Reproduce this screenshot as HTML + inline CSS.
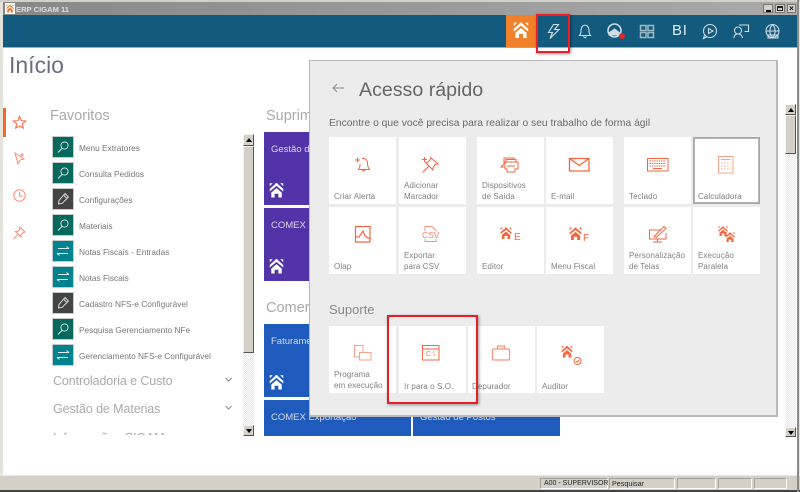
<!DOCTYPE html>
<html><head><meta charset="utf-8"><style>
html,body{margin:0;padding:0}
body{width:800px;height:492px;overflow:hidden;position:relative;background:#e4e3dc;font-family:"Liberation Sans",sans-serif}
div,span,svg{position:absolute;box-sizing:border-box}
.t{white-space:nowrap}
.tile{background:#fff;width:67px;height:67px}
.tile .l{position:absolute;left:5px;bottom:2px;font-size:8px;line-height:10.5px;color:#808080;letter-spacing:.1px;white-space:nowrap}
.tile svg{left:0;top:0;width:67px;height:67px;fill:none;stroke:#f4663f;stroke-width:1}
.fi{left:52px;width:22px;height:22px;border:1px solid #c5ccc9}
.fl{left:79px;font-size:8.3px;color:#777;white-space:nowrap;line-height:12px}
.g{background:#03695c}.k{background:#444}.c{background:#00838f}
.fi svg{left:0;top:0;width:20px;height:20px;fill:none;stroke:#dfecea;stroke-width:.9}
.sb{background:#d4d0c8;border:1px solid;border-color:#f5f4f0 #555 #555 #f5f4f0}
.h{font-size:12.5px;color:#aaa;left:53px;white-space:nowrap;letter-spacing:-.1px}
.sec{font-size:14.5px;color:#aaa;white-space:nowrap;font-weight:normal}
.hi{top:15px;height:32px;fill:none;stroke:#cfdde5;stroke-width:1.1}
.st{top:478px;height:11px;border:1px solid;border-color:#a5a29b #fff #fff #a5a29b}
.tl{color:#dcd8ee;font-size:9.5px;white-space:nowrap;line-height:12px}
.red{border:2px solid #ee1c25;box-shadow:1px 1px 3px rgba(0,0,0,.4)}
.tr{background:repeating-conic-gradient(#fff 0 25%,#e8e6e0 0 50%) 0 0/2px 2px}
</style></head><body>
<svg width="0" height="0" style="left:0;top:0"><defs>
<symbol id="logo" viewBox="0 0 20 20"><path fill="currentColor" d="M1 1H5L1 5ZM19 1H15L19 5ZM8 1H12L10 3ZM1 8.500 10 0.500 19 8.500 19 12 10 4.500 1 12ZM10 7.500 17 13.500V20H12.500V15H7.500V20H3V13.500Z"/></symbol>
<symbol id="mag" viewBox="0 0 20 20"><circle cx="11.500" cy="8.500" r="3.600"/><path d="M9 11.500 5 15.500"/></symbol>
<symbol id="wr" viewBox="0 0 20 20"><path d="M12 4.500 15.500 8 9 14.500 5.500 15 6 11.500ZM11 6.500 13.500 9"/></symbol>
<symbol id="ar" viewBox="0 0 20 20"><path d="M5 7.500H16M13.500 5.500 16 7.500M4 12.500H15M6.500 14.500 4 12.500"/></symbol>
</defs></svg>

<!-- title bar -->
<div style="left:3px;top:2px;width:794px;height:13px;background:linear-gradient(90deg,#888,#999 50%,#aaa)"></div>
<div style="left:5px;top:3px;width:10px;height:11px;background:#fff"></div>
<svg style="left:6px;top:4px;width:8px;height:9px;color:#e9702a" viewBox="0 0 20 20"><use href="#logo"/></svg>
<div class="t" style="left:16px;top:4px;font-size:7.600px;font-weight:bold;color:#ddd;line-height:11px">ERP CIGAM 11</div>
<div style="left:763px;top:4px;width:10px;height:9px;background:#d4d0c8;border:1px solid #777"><div style="left:2px;top:5px;width:5px;height:2px;background:#000"></div></div>
<div style="left:775px;top:4px;width:10px;height:9px;background:#d4d0c8;border:1px solid #777"><div style="left:1px;top:1px;width:6px;height:5px;border:1px solid #222;border-top-width:2px"></div></div>
<div style="left:787px;top:4px;width:9px;height:9px;background:#d4d0c8;border:1px solid #777;color:#000;font-size:8px;line-height:7px;text-align:center;font-weight:bold">×</div>

<!-- header -->
<div style="left:3px;top:15px;width:794px;height:33px;background:#135a7f;border-bottom:1px solid #8db0c2"></div>
<div style="left:506px;top:15px;width:30px;height:32px;background:#f0802a"></div>
<svg style="left:513px;top:22px;width:16px;height:16px;color:#fff" viewBox="0 0 20 20"><use href="#logo"/></svg>
<svg class="hi" style="left:536px;width:34px" viewBox="0 0 34 32"><path d="M17.500 9.500 12.500 17.500H16.500L14 23.500 23 14.500H18.500L22.500 9.500Z"/></svg>
<svg class="hi" style="left:570px;width:30px" viewBox="0 0 30 32"><path d="M9.500 20.500C11 19 11 17 11 15C11.500 8.500 18.500 8.500 19 15C19 17 19 19 20.500 20.500ZM13.500 21.500Q15 24 16.500 21.500"/></svg>
<svg class="hi" style="left:600px;width:30px" viewBox="0 0 30 32"><circle cx="14.500" cy="15.500" r="6.500" stroke-width="1.600"/><path d="M9 18 14.500 14 20 18V20H9Z" fill="#cfdde5"/></svg>
<div style="left:619px;top:33px;width:6px;height:6px;border-radius:50%;background:#e02a2a"></div>
<svg class="hi" style="left:632px;width:30px;stroke:#9db9c8;stroke-width:1.500" viewBox="0 0 30 32"><path d="M8.500 10.500H14V15.500H8.500ZM16 10.500H21.500V15.500H16ZM8.500 17.500H14V22.500H8.500ZM16 17.500H21.500V22.500H16Z"/></svg>
<div class="t" style="left:672px;top:22px;font-size:15px;color:#dfe9ee;line-height:18px;letter-spacing:.8px">BI</div>
<svg class="hi" style="left:695px;width:30px" viewBox="0 0 30 32"><circle cx="15" cy="16" r="6.500"/><path d="M13.500 13.500V18.500L18 16Z"/><path d="M9.500 20.500 8.500 23.500 11.500 22"/></svg>
<svg class="hi" style="left:726px;width:30px" viewBox="0 0 30 32"><circle cx="12" cy="15.500" r="3.500"/><path d="M8 23C8 20 9.500 19 12 19S16 20 16.500 23M13 10H22.500V16.500H18.500"/></svg>
<svg class="hi" style="left:757px;width:30px" viewBox="0 0 30 32"><circle cx="15.500" cy="16" r="6.500"/><path d="M9 16H22M15.500 9.500C12 13 12 19 15.500 22.500C19 19 19 13 15.500 9.500"/><path d="M11 20H21V23H11Z"/></svg>

<!-- content -->
<div style="left:3px;top:48px;width:794px;height:427px;background:#fff"></div>
<div class="t" style="left:9px;top:51px;font-size:23px;line-height:28px;color:#667080">Início</div>

<div style="left:3px;top:108px;width:3px;height:29px;background:#f4662a"></div>
<svg style="left:12px;top:115px;width:15px;height:15px;fill:none;stroke:#f4663f" viewBox="0 0 15 15"><path d="M7.500 1.500 9.200 5.700 13.700 6 10.200 8.800 11.400 13.200 7.500 10.800 3.600 13.200 4.800 8.800 1.300 6 5.800 5.700Z"/></svg>
<svg style="left:12px;top:151px;width:15px;height:15px;fill:none;stroke:#f88c75" viewBox="0 0 15 15"><path d="M3 2 6 13 8 9 12 8ZM10 2V6M8 4H12"/></svg>
<svg style="left:12px;top:188px;width:15px;height:15px;fill:none;stroke:#f88c75" viewBox="0 0 15 15"><circle cx="7.500" cy="7.500" r="5.700"/><path d="M7.500 4V8H11"/></svg>
<svg style="left:12px;top:225px;width:15px;height:15px;fill:none;stroke:#f88c75" viewBox="0 0 15 15"><path d="M8 2 13 7 11 7.500 9 10 9 12 3.500 6.500 5.500 6.500 7.500 4.500ZM6 9.500 1.500 14"/></svg>

<div class="sec" style="left:50px;top:107px;line-height:18px">Favoritos</div>
<div class="sec" style="left:266px;top:107px;line-height:18px">Suprim</div>
<div class="sec" style="left:266px;top:299px;line-height:18px">Comerc</div>

<div class="fi g" style="top:136px"><svg><use href="#mag"/></svg></div><div class="fl" style="top:142px">Menu Extratores</div>
<div class="fi g" style="top:162px"><svg><use href="#mag"/></svg></div><div class="fl" style="top:168px">Consulta Pedidos</div>
<div class="fi k" style="top:188px"><svg><use href="#wr"/></svg></div><div class="fl" style="top:194px">Configurações</div>
<div class="fi g" style="top:214px"><svg><use href="#mag"/></svg></div><div class="fl" style="top:220px">Materiais</div>
<div class="fi c" style="top:240px"><svg><use href="#ar"/></svg></div><div class="fl" style="top:246px">Notas Fiscais - Entradas</div>
<div class="fi c" style="top:266px"><svg><use href="#ar"/></svg></div><div class="fl" style="top:272px">Notas Fiscais</div>
<div class="fi k" style="top:292px"><svg><use href="#wr"/></svg></div><div class="fl" style="top:298px">Cadastro NFS-e Configurável</div>
<div class="fi g" style="top:318px"><svg><use href="#mag"/></svg></div><div class="fl" style="top:324px">Pesquisa Gerenciamento NFe</div>
<div class="fi c" style="top:344px"><svg><use href="#ar"/></svg></div><div class="fl" style="top:350px">Gerenciamento NFS-e Configurável</div>

<div class="h" style="top:373px;line-height:16px">Controladoria e Custo</div>
<div class="h" style="top:401px;line-height:16px">Gestão de Materias</div>
<div style="left:52px;top:431px;width:185px;height:4px;overflow:hidden"><div class="h" style="left:1px;top:-1px;line-height:16px">Informações CIGAM</div></div>
<svg style="left:224px;top:376px;width:9px;height:8px;fill:none;stroke:#888" viewBox="0 0 9 8"><path d="M1.500 2 4.500 5 7.500 2"/></svg>
<svg style="left:224px;top:404px;width:9px;height:8px;fill:none;stroke:#888" viewBox="0 0 9 8"><path d="M1.500 2 4.500 5 7.500 2"/></svg>

<!-- list scrollbar -->
<div class="tr" style="left:243px;top:134px;width:11px;height:302px"></div>
<div class="sb" style="left:243px;top:134px;width:11px;height:12px"><div style="left:2px;top:3px;width:0;height:0;border:3px solid transparent;border-bottom:4px solid #000;border-top:0"></div></div>
<div class="sb" style="left:243px;top:146px;width:11px;height:207px"></div>
<div class="sb" style="left:243px;top:425px;width:11px;height:11px"><div style="left:2px;top:3px;width:0;height:0;border:3px solid transparent;border-top:4px solid #000;border-bottom:0"></div></div>

<!-- right scrollbar -->
<div class="tr" style="left:785px;top:104px;width:11px;height:333px"></div>
<div class="sb" style="left:785px;top:104px;width:11px;height:11px"><div style="left:2px;top:3px;width:0;height:0;border:3px solid transparent;border-bottom:4px solid #000;border-top:0"></div></div>
<div class="sb" style="left:785px;top:115px;width:11px;height:39px"></div>
<div class="sb" style="left:785px;top:427px;width:11px;height:10px"><div style="left:2px;top:3px;width:0;height:0;border:3px solid transparent;border-top:4px solid #000;border-bottom:0"></div></div>

<!-- background tiles -->
<div style="left:264px;top:132px;width:60px;height:73px;background:#5233a8"></div>
<div style="left:264px;top:208px;width:60px;height:73px;background:#5233a8"></div>
<div class="tl" style="left:271px;top:144px">Gestão d</div>
<div class="tl" style="left:271px;top:220px">COMEX I</div>
<svg style="left:269px;top:182px;width:15px;height:16px;color:#fff" viewBox="0 0 20 20"><use href="#logo"/></svg>
<svg style="left:269px;top:258px;width:15px;height:16px;color:#fff" viewBox="0 0 20 20"><use href="#logo"/></svg>
<div style="left:264px;top:324px;width:60px;height:73px;background:#1f5bbd"></div>
<div class="tl" style="left:271px;top:336px">Faturame</div>
<svg style="left:269px;top:374px;width:15px;height:16px;color:#fff" viewBox="0 0 20 20"><use href="#logo"/></svg>
<div style="left:264px;top:400px;width:147px;height:36px;background:#1f5bbd"></div>
<div style="left:413px;top:400px;width:147px;height:36px;background:#1f5bbd"></div>
<div class="tl" style="left:271px;top:412px">COMEX Exportação</div>
<div class="tl" style="left:420px;top:412px">Gestão de Postos</div>

<!-- panel -->
<div style="left:309px;top:60px;width:469px;height:357px;background:#ececec;border:1px solid #b8b8b8;border-width:1px 2px 2px 1px"></div>
<svg style="left:331px;top:81px;width:14px;height:14px;fill:none;stroke:#888" viewBox="0 0 14 14"><path d="M13 7H2M6 3 2 7 6 11"/></svg>
<div class="t" style="left:359px;top:77px;font-size:19.600px;line-height:26px;color:#666">Acesso rápido</div>
<div class="t" style="left:329px;top:117px;font-size:10.300px;line-height:13px;color:#6a6a6a">Encontre o que você precisa para realizar o seu trabalho de forma ágil</div>

<!-- row 1 -->
<div class="tile" style="left:329px;top:137px"><svg viewBox="0 0 67 67"><path d="M26 23H31M28.500 20.500V25.500M31 27V28C31 30 30 31 29.500 32.500H40.500C39.500 31 38.500 30 38.500 27C38.500 23 37 21 33 21.500M33 32.500Q34.500 35.500 36.500 32.500"/></svg><div class="l">Criar Alerta</div></div>
<div class="tile" style="left:399px;top:137px"><svg viewBox="0 0 67 67"><path d="M23 22.500H28M25.500 20V25M31.500 20.500 39 27 36 27.500 34 31 34 33 26.500 25.500 29 25 31 23ZM29.500 29.500 23.500 35.500"/></svg><div class="l">Adicionar<br>Marcador</div></div>
<div class="tile" style="left:477px;top:137px"><svg viewBox="0 0 67 67"><path d="M27 27 24 30H28M27 27V21H37V23M29 25V22.500H39V25M28 25H41V32H38V35H30V32H28ZM30 29H38"/></svg><div class="l">Dispositivos<br>de Saída</div></div>
<div class="tile" style="left:546px;top:137px"><svg viewBox="0 0 67 67" style="stroke-width:1.300"><path d="M23.500 21.500H43V34H23.500ZM23.500 21.500 33.250 28.500 43 21.500"/></svg><div class="l">E-mail</div></div>
<div class="tile" style="left:624px;top:137px"><svg viewBox="0 0 67 67"><path d="M23.500 21.500H44V34H23.500Z"/><path d="M25.500 24H42M25.500 26.500H42M25.500 29H42" stroke-dasharray="1.500 .8"/><path d="M29 31.500H38"/></svg><div class="l">Teclado</div></div>
<div class="tile" style="left:693px;top:137px;border:1px solid #a8a8a8;box-shadow:inset 0 0 0 1px #b5b5b5"><svg style="left:-1px;top:-1px;stroke:#f8a48c" viewBox="0 0 67 67"><path d="M25.500 19.500H40V36H25.500ZM28 22.500H37.500"/><path d="M28 26H37.500M28 29H37.500M28 32H37.500" stroke-dasharray="1.500 1.500"/></svg><div class="l" style="left:4px;bottom:1px">Calculadora</div></div>
<!-- row 2 -->
<div class="tile" style="left:329px;top:207px"><svg viewBox="0 0 67 67" style="stroke-width:1.200"><path d="M26.500 19.500H41V35H26.500ZM27 30H30L32 27 34 24 36 29 39 31H41"/></svg><div class="l">Olap</div></div>
<div class="tile" style="left:399px;top:207px"><svg viewBox="0 0 67 67" style="stroke:#f8937b"><path d="M26 24V19.500H33L37 23.500V24.500M37 32V34.500H26V32"/></svg><div class="t" style="left:23px;top:23px;font-size:8.500px;line-height:10px;color:#f4805f">CSV</div><div class="l">Exportar<br>para CSV</div></div>
<div class="tile" style="left:477px;top:207px"><svg style="left:23px;top:19px;width:12px;height:14px;color:#f4663f;stroke:none" viewBox="0 0 20 20"><use href="#logo"/></svg><div class="t" style="left:37px;top:25px;font-size:10px;line-height:11px;color:#f4663f">E</div><div class="l">Editor</div></div>
<div class="tile" style="left:546px;top:207px"><svg style="left:23px;top:20px;width:13px;height:13px;color:#f4663f;stroke:none" viewBox="0 0 20 20"><use href="#logo"/></svg><div class="t" style="left:37px;top:26px;font-size:10px;line-height:11px;color:#f4663f">F</div><div class="l">Menu Fiscal</div></div>
<div class="tile" style="left:624px;top:207px"><svg viewBox="0 0 67 67"><path d="M37 23H25.500V32H42V26M33.500 32V35M29 35H38M30 29.500 40 19.500 42 21.500 32 30.500Z"/></svg><div class="l">Personalização<br>de Telas</div></div>
<div class="tile" style="left:693px;top:207px"><svg style="left:25px;top:19px;width:10px;height:10px;color:#f4663f;stroke:none" viewBox="0 0 20 20"><use href="#logo"/></svg><svg style="left:32px;top:25px;width:10px;height:10px;color:#f4663f;stroke:none" viewBox="0 0 20 20"><use href="#logo"/></svg><div class="l">Execução<br>Paralela</div></div>

<div class="t" style="left:329px;top:302px;font-size:13px;line-height:16px;color:#888">Suporte</div>
<!-- row 3 -->
<div class="tile" style="left:329px;top:326px"><svg viewBox="0 0 67 67" style="stroke:#f8a18c"><path d="M30.500 31H25.500V19.500H34V26.500M30.500 26.500H42V34H30.500Z"/></svg><div class="l" style="bottom:2px">Programa<br>em execução</div></div>
<div class="tile" style="left:399px;top:326px"><svg viewBox="0 0 67 67"><path d="M23.500 19.500H40V34H23.500ZM23.500 23H40"/></svg><div class="t" style="left:27px;top:24px;font-size:7px;line-height:9px;color:#f4805f">C:\</div><div class="l" style="bottom:1px">Ir para o S.O.</div></div>
<div class="tile" style="left:468px;top:326px"><svg viewBox="0 0 67 67" style="stroke:#f8937b;stroke-width:1.200"><path d="M26 23H40Q41.500 23 41.500 24.500V32.500Q41.500 34 40 34H26Q24.500 34 24.500 32.500V24.500Q24.500 23 26 23ZM29.500 23V20H36.500V23"/></svg><div class="l" style="bottom:1px;left:4px">Depurador</div></div>
<div class="tile" style="left:537px;top:326px"><svg style="left:24px;top:19px;width:12px;height:13px;color:#f4663f;stroke:none" viewBox="0 0 20 20"><use href="#logo"/></svg><svg viewBox="0 0 67 67"><circle cx="40.500" cy="35" r="3.500"/><path d="M39 35 40.300 36.300 42.200 33.800"/></svg><div class="l" style="bottom:1px;left:5px">Auditor</div></div>

<!-- red boxes -->
<div class="red" style="left:536px;top:14px;width:34px;height:39px"></div>
<div class="red" style="left:387px;top:315px;width:91px;height:89px"></div>

<!-- status bar -->
<div style="left:0;top:475px;width:800px;height:17px;background:#d4d0c8;border-top:1px solid #e8e6e0"></div>
<div style="left:0;top:490px;width:800px;height:2px;background:#444"></div>
<div style="left:0;top:0;width:800px;height:2px;background:#d4d0c8"></div>
<div style="left:797px;top:0;width:2px;height:492px;background:#8a8a86"></div>
<div class="st t" style="left:540px;top:478px;width:68px;font-size:7px;line-height:9px;color:#222;padding-left:3px">A00 - SUPERVISOR</div>
<div class="st t" style="left:609px;top:478px;width:66px;font-size:7.200px;line-height:9px;color:#222;padding-left:2px">Pesquisar</div>
<div class="st" style="left:677px;width:39px"></div>
<div class="st" style="left:718px;width:34px"></div>
<div class="st" style="left:754px;width:33px"></div>
</body></html>
